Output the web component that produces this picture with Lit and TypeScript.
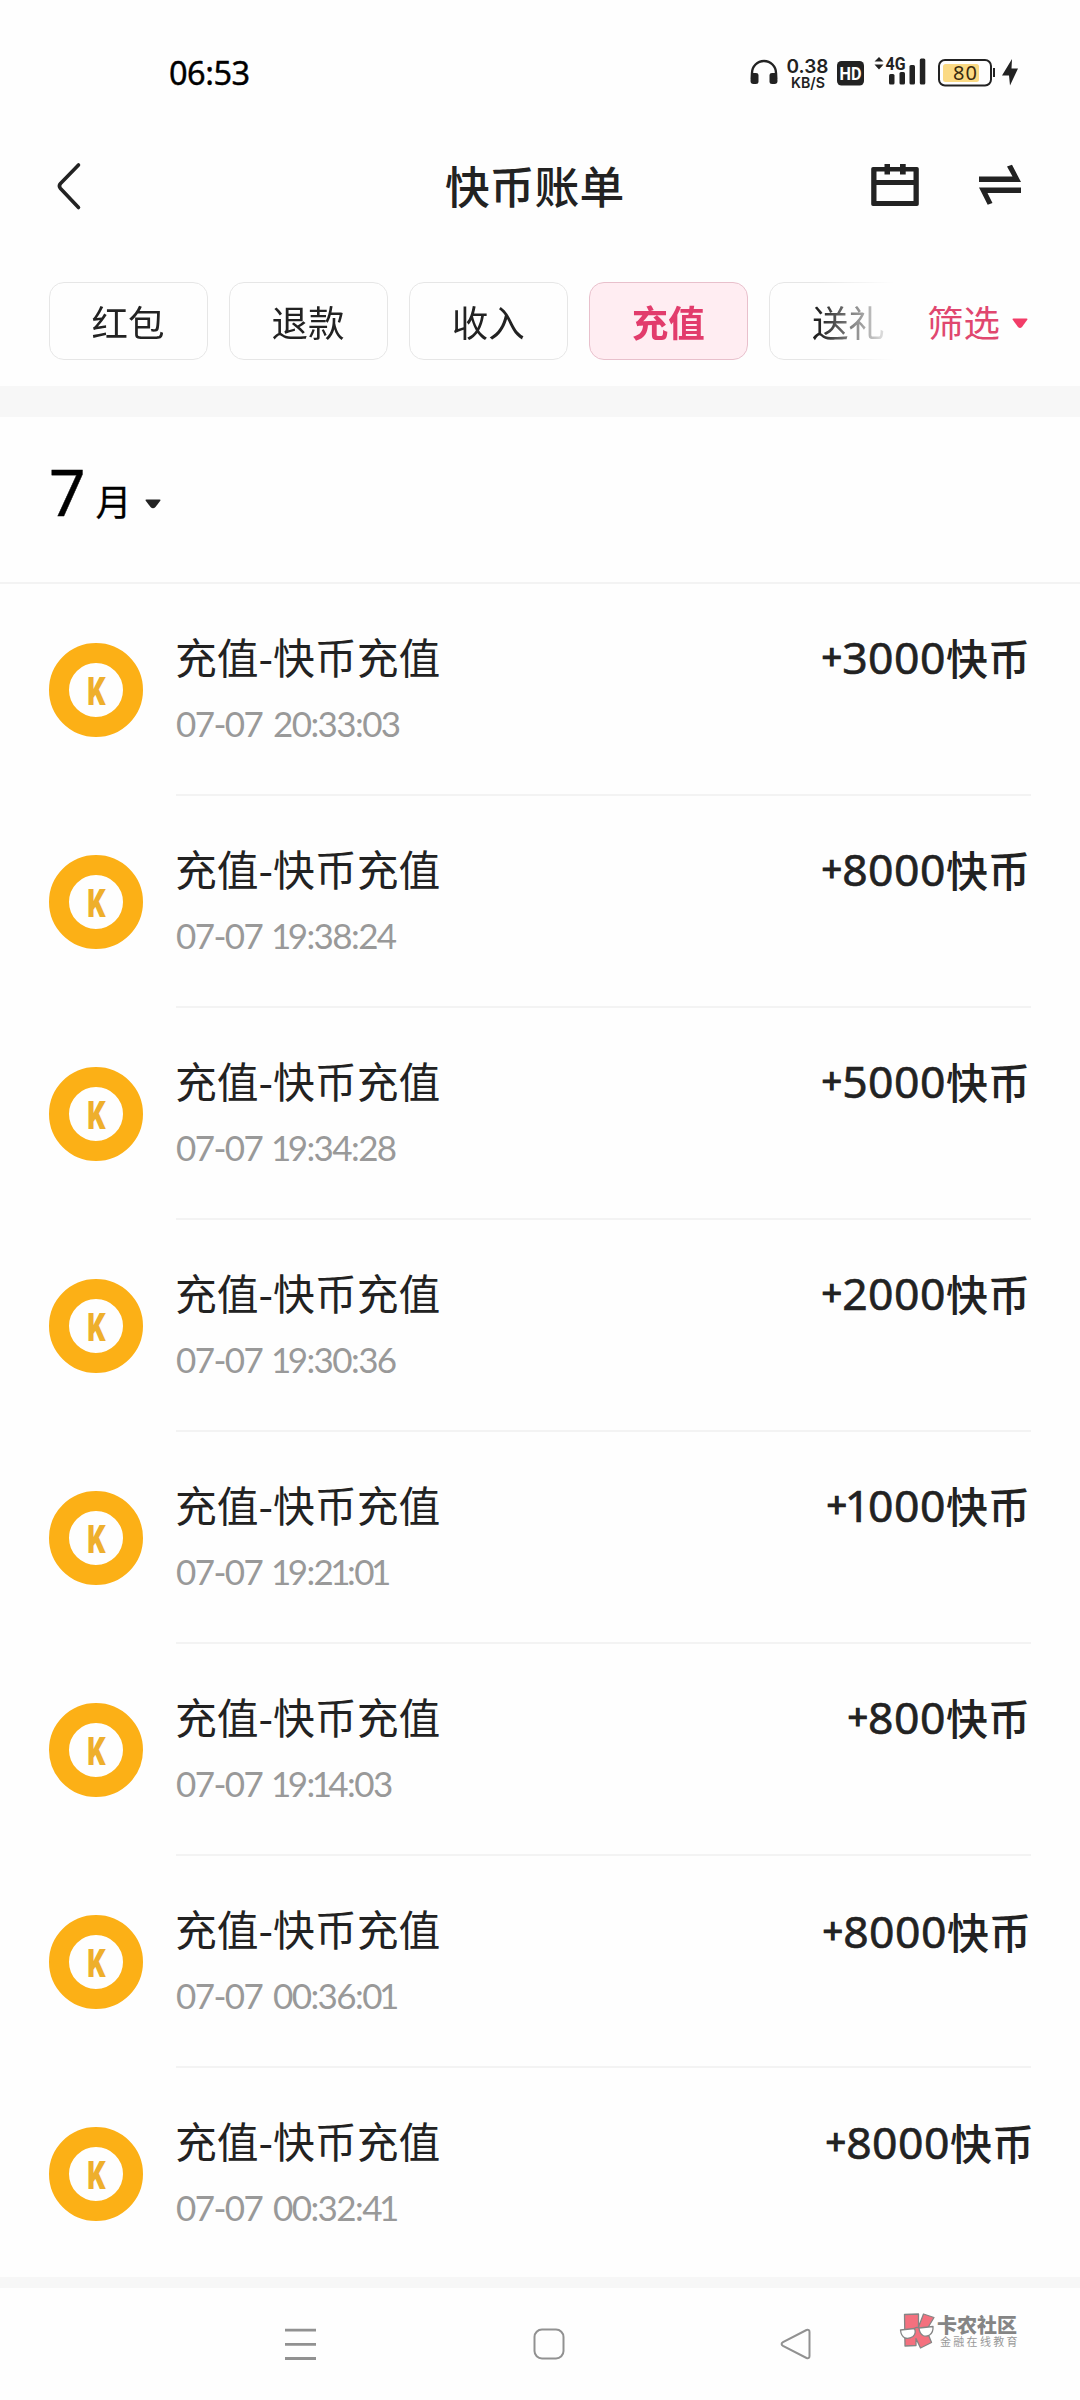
import { LitElement, html, css } from "lit";
import { customElement, property, state } from "lit/decorators.js";
import { classMap } from "lit/directives/class-map.js";

interface Entry {
  time: string;
  amount: string;
  nudge?: string;
}

const ENTRIES: Entry[] = [
  { time: "07-07 20:33:03", amount: "3000" },
  { time: "07-07 19:38:24", amount: "8000" },
  { time: "07-07 19:34:28", amount: "5000" },
  { time: "07-07 19:30:36", amount: "2000" },
  { time: "07-07 19:21:01", amount: "1000" },
  { time: "07-07 19:14:03", amount: "800" },
  { time: "07-07 00:36:01", amount: "8000", nudge: "shift-a" },
  { time: "07-07 00:32:41", amount: "8000", nudge: "shift-b" },
];

const FILTERS = ["红包", "退款", "收入", "充值", "送礼"];

/** Sets the digit 1 on a narrower advance than the other figures. */
const figures = (s: string) => s.split(/(1)/).map((p) => (p === "1" ? html`<span class="one">1</span>` : p));

@customElement("status-bar")
class StatusBar extends LitElement {
  static styles = css`
    :host {
      display: flex;
      justify-content: space-between;
      height: 110px;
      padding: 0 50px 0 169px;
      color: #000;
      font-family: "Noto Sans", sans-serif;
    }
    .time {
      margin-top: 51px;
      font-size: 32.5px;
      line-height: 44px;
      letter-spacing: -0.5px;
      -webkit-text-stroke: 0.4px #000;
    }
    svg {
      display: block;
    }
    .num {
      font-family: Inter, sans-serif;
      font-size: 19px;
      font-weight: 600;
    }
    .unit {
      font-family: Inter, sans-serif;
      font-size: 15px;
      font-weight: 600;
    }
    .hd {
      font-family: Roboto, sans-serif;
      font-size: 19px;
      font-weight: 700;
      fill: #fff;
    }
    .net {
      font-family: Roboto, sans-serif;
      font-size: 18px;
      font-weight: 700;
    }
    .level {
      font-family: "Noto Sans", sans-serif;
      font-size: 20px;
      fill: #3a2a10;
    }
  `;
  render() {
    return html`
      <div class="time">06:53</div>
      <svg width="290" height="110" viewBox="740 0 290 110" fill="#222">
        <path d="M752 79V73a12 12 0 0 1 24 0v6" fill="none" stroke="#222" stroke-width="2.4" />
        <path d="M751 73h5q2.500 0 2.500 2v7q0 2-2.500 2h-2.500q-3 0-3-3zM777 73h-5q-2.500 0-2.500 2v7q0 2 2.500 2h2.500q3 0 3-3z" />
        <text class="num" x="786.5" y="73" textLength="42">0.38</text>
        <text class="unit" x="791" y="88" textLength="34" lengthAdjust="spacingAndGlyphs">KB/S</text>
        <rect x="837" y="61" width="27" height="24.5" rx="4.5" />
        <text class="hd" x="839.5" y="80" textLength="22" lengthAdjust="spacingAndGlyphs">HD</text>
        <path d="M874.500 61.500l4.500-4.500 4.500 4.500zM874.500 64.500h9l-4.500 5z" />
        <text class="net" x="885.5" y="70" textLength="20" lengthAdjust="spacingAndGlyphs">4G</text>
        <rect x="889" y="74" width="5.5" height="10.5" rx="1.5" />
        <rect x="899.5" y="72" width="5.5" height="12.5" rx="1.5" />
        <rect x="909.5" y="65" width="5.5" height="19.5" rx="1.5" />
        <rect x="919.8" y="58.5" width="5.5" height="26" rx="1.5" />
        <rect x="939" y="60" width="52" height="25.5" rx="6" fill="none" stroke="#222" stroke-width="2" />
        <rect x="943" y="64" width="36" height="18" rx="2.5" fill="#fbda84" />
        <rect x="993" y="68" width="2" height="9" />
        <text class="level" x="953" y="80" textLength="24">80</text>
        <path d="M1012 59L1002 75.500h7l1 10 8-17h-6.500z" />
      </svg>
    `;
  }
}

@customElement("page-header")
class PageHeader extends LitElement {
  static styles = css`
    :host {
      display: grid;
      grid-template-columns: 446px 1fr 58px;
      align-items: center;
      height: 152px;
      color: #222;
    }
    svg {
      display: block;
    }
    .back {
      margin: -1px 0 0 54px;
    }
    .title {
      display: flex;
      justify-content: space-between;
      align-items: center;
      margin: -2px 0 0 -1px;
      font-size: 44.8px;
      font-weight: 500;
      line-height: 60px;
    }
  `;
  render() {
    return html`
      <svg class="back" width="30" height="52" viewBox="54 159 30 52" fill="none" stroke="#222" stroke-width="3.6" stroke-linecap="round" stroke-linejoin="round">
        <path d="M78.5 164L60.500 182.500q-2.200 2.500 0 5L78.500 206.500" />
      </svg>
      <div class="title">
        <span>快币账单</span>
        <svg width="154" height="48" viewBox="868 161 154 48" fill="#222">
          <path fill-rule="evenodd" d="M873 167H884.500V164h5.500v3H900V164h5.700v3H917q1.800 0 1.800 1.800V204.200q0 1.800-1.800 1.800H873q-1.800 0-1.800-1.800V168.800Q871.200 167 873 167zM876.500 171.500V180H913.500V171.500H905.700V174.500H900V171.500H890V174.500H884.500V171.500zM876.500 185V201H913.500V185z" />
          <path d="M979 176.500H1012.500L1007 166.500 1012 164.800 1021 182H979z" />
          <path d="M1021 187.500H979L987.700 204.800 992.500 203 987.500 193H1021z" />
        </svg>
      </div>
    `;
  }
}

@customElement("filter-bar")
class FilterBar extends LitElement {
  @state() private active = "充值";
  static styles = css`
    :host {
      display: flex;
      box-sizing: border-box;
      height: 124px;
      padding: 20px 49px 0 49px;
      color: #222;
      font-size: 36.5px;
    }
    .chips {
      flex: none;
      display: flex;
      gap: 21.1px;
      width: 846px;
      height: 78px;
      overflow: hidden;
      -webkit-mask-image: linear-gradient(to right, #000 770px, rgba(0, 0, 0, 0.2) 830px, transparent 846px);
      mask-image: linear-gradient(to right, #000 770px, rgba(0, 0, 0, 0.2) 830px, transparent 846px);
    }
    .chip {
      flex: none;
      box-sizing: border-box;
      width: 159px;
      height: 78px;
      padding-right: 1px;
      border: 1px solid #e6e6e6;
      border-radius: 15px;
      line-height: 77px;
      text-align: center;
      white-space: nowrap;
    }
    .chip.on {
      border-color: #e8c0cc;
      background: #ffedf2;
      color: #e23c6c;
      font-weight: 700;
    }
    .more {
      display: flex;
      align-items: center;
      height: 78px;
      margin-left: 32px;
      gap: 12px;
      color: #e0476f;
      white-space: nowrap;
    }
    svg {
      display: block;
      margin-top: 5px;
    }
  `;
  render() {
    return html`
      <div class="chips">
        ${FILTERS.map(
          (f) => html`<div class=${classMap({ chip: true, on: f === this.active })} @click=${() => (this.active = f)}>${f}</div>`
        )}
      </div>
      <div class="more">
        <span>筛选</span>
        <svg width="16" height="11" viewBox="0 0 16 11" fill="#f23d68"><path d="M1.500 0.500h13q1.500 0 .8 1.300L10 9q-2 2-4 0L.7 1.800Q0 .500 1.500.500z" /></svg>
      </div>
    `;
  }
}

@customElement("bill-row")
class BillRow extends LitElement {
  @property({ attribute: false }) entry!: Entry;
  @property({ type: Boolean }) last = false;
  static styles = css`
    :host {
      display: flex;
      height: 212px;
      padding: 0 49px;
      color: #222;
    }
    .coin {
      flex: none;
      display: block;
      margin-top: 59px;
    }
    .coin text {
      font-family: Roboto, sans-serif;
      font-size: 38px;
      font-weight: 900;
      fill: #eeaf2c;
    }
    .body {
      flex: 1;
      display: flex;
      justify-content: space-between;
      box-sizing: border-box;
      height: 212px;
      margin-left: 33px;
      border-bottom: 2px solid #f3f3f3;
    }
    .body.last {
      border-bottom-color: transparent;
    }
    .name {
      margin: 42px 0 0 -1px;
      font-size: 41.8px;
      line-height: 60px;
    }
    .time {
      margin-top: 15px;
      color: #999;
      font-family: Lato, sans-serif;
      font-size: 35px;
      line-height: 44px;
      letter-spacing: -1.6px;
      word-spacing: 3.5px;
    }
    .time .one {
      margin: 0 -2px;
    }
    .amount {
      display: flex;
      height: 60px;
      margin: 43px 1px 0 0;
      font-size: 42px;
      line-height: 60px;
      font-weight: 500;
    }
    .plus,
    .digits {
      font-family: "Noto Sans", sans-serif;
      font-weight: 400;
      -webkit-text-stroke: 0.6px #222;
    }
    .plus {
      font-size: 36px;
      -webkit-text-stroke-width: 1.2px;
    }
    .digits {
      font-size: 44.5px;
      letter-spacing: 0.5px;
    }
    .digits .one {
      margin: 0 -2.5px;
    }
    .amount.shift-a {
      position: relative;
      left: 1px;
      top: 2px;
    }
    .amount.shift-b {
      position: relative;
      left: 4px;
      top: 1px;
    }
  `;
  render() {
    const { time, amount, nudge } = this.entry;
    return html`
      <svg class="coin" width="94" height="94" viewBox="0 0 94 94">
        <circle cx="47" cy="47" r="37" fill="none" stroke="#fcb016" stroke-width="20" />
        <text x="38" y="61.5" textLength="18.5" lengthAdjust="spacingAndGlyphs">K</text>
      </svg>
      <div class=${classMap({ body: true, last: this.last })}>
        <div>
          <div class="name">充值-快币充值</div>
          <div class="time">${figures(time)}</div>
        </div>
        <div class="amount ${nudge ?? ""}"><span class="plus">+</span><span class="digits">${figures(amount)}</span><span>快币</span></div>
      </div>
    `;
  }
}

@customElement("nav-bar")
class NavBar extends LitElement {
  static styles = css`
    :host {
      display: flex;
      align-items: center;
      height: 112px;
      padding-left: 284px;
    }
    svg {
      display: block;
    }
    .keys {
      flex: none;
      width: 529px;
      display: flex;
      justify-content: space-between;
    }
    .home {
      margin-left: 2px;
    }
    .brand {
      display: flex;
      align-items: center;
      margin: -27px 0 0 86px;
      gap: 2px;
      color: #858585;
    }
    .name {
      font-size: 20px;
      line-height: 21px;
      font-weight: 900;
    }
    .sub {
      margin: 0 0 0 3px;
      color: #999;
      font-size: 11px;
      line-height: 13px;
      letter-spacing: 2.3px;
      white-space: nowrap;
    }
  `;
  render() {
    return html`
      <div class="keys">
        <svg width="33" height="34" viewBox="0 0 33 34" stroke="#919191" stroke-width="2.8"><path d="M1 3.200h31M1 17.300h31M1 31.500h31" /></svg>
        <svg class="home" width="34" height="34" viewBox="0 0 34 34" fill="none" stroke="#919191" stroke-width="2"><rect x="2.500" y="2.500" width="29" height="29" rx="7.500" /></svg>
        <svg width="34" height="34" viewBox="0 0 34 34" fill="none" stroke="#919191" stroke-width="2"><path d="M27.500 3L4 15.200q-2.800 1.800 0 3.600L27.500 31q3 .800 3-2V5q0-2.800-3-2z" /></svg>
      </div>
      <div class="brand">
        <svg width="36" height="38" viewBox="899 2311 36 38" stroke="#858585" stroke-width="1.3" stroke-linejoin="round">
          <path fill="#f4707e" d="M904.500 2313.500l14-.500v13l5-13 10.500 3.500-7.500 12.500 5 12.500-11 5.500-4.500-9.500v7l-11 .500z" />
          <path fill="#fff" d="M900.500 2329l14-1.500q2 5-1.500 8-4 2.500-8 1.500-4-2-4.500-8zM919 2327l14-1.500q.500 6-3.500 8.500-3.500 2-6.500 .5-3.500-2-4-7.500z" />
          <path fill="none" d="M914 2328q2-2.500 5-1" />
        </svg>
        <div>
          <div class="name">卡农社区</div>
          <div class="sub">金融在线教育</div>
        </div>
      </div>
    `;
  }
}

@customElement("app-root")
class AppRoot extends LitElement {
  static styles = css`
    :host {
      display: flex;
      flex-direction: column;
      width: 1080px;
      height: 2400px;
      overflow: hidden;
      background: #fefefe;
      font-family: "Noto Sans CJK SC", sans-serif;
    }
    .band {
      flex: none;
      height: 31px;
      background: #f7f7f7;
    }
    .band.thin {
      height: 11px;
    }
    .month {
      flex: none;
      display: flex;
      box-sizing: border-box;
      align-items: baseline;
      height: 167px;
      padding: 35px 0 0 49px;
      border-bottom: 2px solid #f3f3f3;
      color: #000;
    }
    .num {
      font-family: "Noto Sans", sans-serif;
      font-size: 64px;
      line-height: 80px;
      -webkit-text-stroke: 0.4px #000;
    }
    .unit {
      margin-left: 10px;
      font-size: 36px;
      -webkit-text-stroke: 0.3px #000;
    }
    .arrow {
      margin-left: 13px;
    }
    .list {
      flex: none;
      height: 1693px;
      overflow: hidden;
    }
  `;
  render() {
    return html`
      <status-bar></status-bar>
      <page-header></page-header>
      <filter-bar></filter-bar>
      <div class="band"></div>
      <div class="month">
        <span class="num">7</span>
        <span class="unit">月</span>
        <svg class="arrow" width="16" height="17" viewBox="0 0 16 17" fill="#222"><path d="M1.500 0.500h13q1.500 0 .8 1.300L10.500 8q-2.500 2.500-5 0L.7 1.800Q0 .500 1.500.500z" /></svg>
      </div>
      <div class="list">
        ${ENTRIES.map((e, i) => html`<bill-row .entry=${e} ?last=${i === ENTRIES.length - 1}></bill-row>`)}
      </div>
      <div class="band thin"></div>
      <nav-bar></nav-bar>
    `;
  }
}
